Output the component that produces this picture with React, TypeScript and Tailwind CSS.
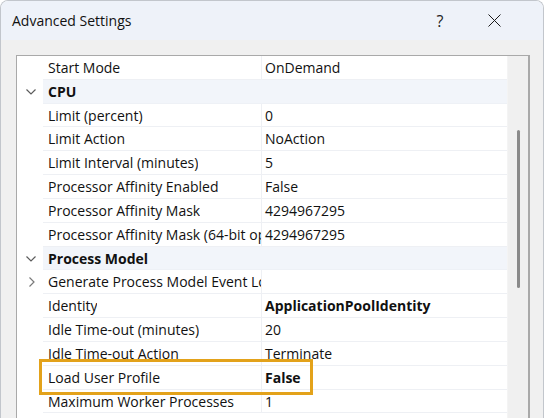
import React from 'react'

type Row =
  | { kind: 'cat'; name: string }
  | { kind: 'prop'; name: string; value?: string; bold?: boolean; expand?: boolean }

const rows: Row[] = [
  { kind: 'prop', name: 'Start Mode', value: 'OnDemand' },
  { kind: 'cat', name: 'CPU' },
  { kind: 'prop', name: 'Limit (percent)', value: '0' },
  { kind: 'prop', name: 'Limit Action', value: 'NoAction' },
  { kind: 'prop', name: 'Limit Interval (minutes)', value: '5' },
  { kind: 'prop', name: 'Processor Affinity Enabled', value: 'False' },
  { kind: 'prop', name: 'Processor Affinity Mask', value: '4294967295' },
  { kind: 'prop', name: 'Processor Affinity Mask (64-bit option)', value: '4294967295' },
  { kind: 'cat', name: 'Process Model' },
  { kind: 'prop', name: 'Generate Process Model Event Log Entry', expand: true },
  { kind: 'prop', name: 'Identity', value: 'ApplicationPoolIdentity', bold: true },
  { kind: 'prop', name: 'Idle Time-out (minutes)', value: '20' },
  { kind: 'prop', name: 'Idle Time-out Action', value: 'Terminate' },
  { kind: 'prop', name: 'Load User Profile', value: 'False', bold: true },
  { kind: 'prop', name: 'Maximum Worker Processes', value: '1' },
]

function ChevronDown() {
  return (
    <svg width="10" height="6" viewBox="0 0 10 6" fill="none">
      <path d="M0.5 0.5 L5 5 L9.5 0.5" stroke="#5c5c5c" strokeWidth="1.2" />
    </svg>
  )
}

function ChevronRight() {
  return (
    <svg width="6" height="10" viewBox="0 0 6 10" fill="none">
      <path d="M0.5 0.5 L5 5 L0.5 9.5" stroke="#7a7a7a" strokeWidth="1.2" />
    </svg>
  )
}

function PropRow({ row }: { row: Row }) {
  if (row.kind === 'cat') {
    return (
      <div className="flex h-[23.84px] shrink-0">
        <div className="w-[26px] shrink-0 flex items-center justify-center pl-[2px] bg-white">
          <ChevronDown />
        </div>
        <div className="flex-1 bg-[#f2f5fa] border-b border-[#eef1f6] flex items-center pl-[5px] font-bold">
          {row.name}
        </div>
      </div>
    )
  }
  return (
    <div className="flex h-[23.84px] shrink-0">
      <div className="w-[26px] shrink-0 flex items-center justify-center pl-[3px] bg-white">
        {row.expand && <ChevronRight />}
      </div>
      <div className="w-[219px] shrink-0 border-b border-r border-[#eef0f4] flex items-center pl-[5px] overflow-hidden whitespace-nowrap">
        <span className="block min-w-0 overflow-hidden">{row.name}</span>
      </div>
      <div
        className={`flex-1 min-w-0 border-b border-[#eef0f4] flex items-center pl-[3px] whitespace-nowrap overflow-hidden ${
          row.bold ? 'font-bold' : ''
        }`}
      >
        {row.value}
      </div>
    </div>
  )
}

export default function App() {
  return (
    <div className="relative w-[544px] h-[418px] bg-white overflow-hidden font-['Open_Sans',sans-serif] text-[#111]">
      <div className="flex flex-col w-full h-full rounded-t-[8px] border border-b-0 border-[#c2c6cc] overflow-hidden">
        {/* Title bar */}
        <div className="h-[39px] shrink-0 bg-[#eef2f9] flex items-center pl-[11px]">
          <span className="text-[14px]">Advanced Settings</span>
          <div className="ml-auto flex items-center">
            <span className="w-[24px] text-center text-[16px] text-[#222]">?</span>
            <div className="ml-[19px] w-[46px] h-[30px] flex items-center justify-center">
              <svg width="13" height="13" viewBox="0 0 13 13" fill="none">
                <path d="M0.5 0.5 L12.5 12.5 M12.5 0.5 L0.5 12.5" stroke="#1a1a1a" strokeWidth="1" />
              </svg>
            </div>
            <div className="w-[26px]" />
          </div>
        </div>

        {/* Body */}
        <div className="flex-1 bg-[#f0f0f0] pl-[15px] pt-[15px]">
          <div className="w-[514px] h-full flex border-l border-t border-r-2 border-[#a9a9a9] bg-white text-[14px]">
            <div className="flex-1 flex flex-col overflow-hidden">
              {rows.map((r, i) => (
                <PropRow key={i} row={r} />
              ))}
            </div>
            {/* Scrollbar */}
            <div className="w-[21px] shrink-0 bg-[#f0f0f0] border-l border-[#f4f4f4] flex justify-center">
              <div className="mt-[74px] w-[3px] h-[158px] rounded-full bg-[#8a8a8a]" />
            </div>
          </div>
        </div>
      </div>

      {/* Highlight box */}
      <div className="absolute left-[39px] top-[359px] w-[274px] h-[36px] border-[3px] border-[#e3a21a]" />
    </div>
  )
}
